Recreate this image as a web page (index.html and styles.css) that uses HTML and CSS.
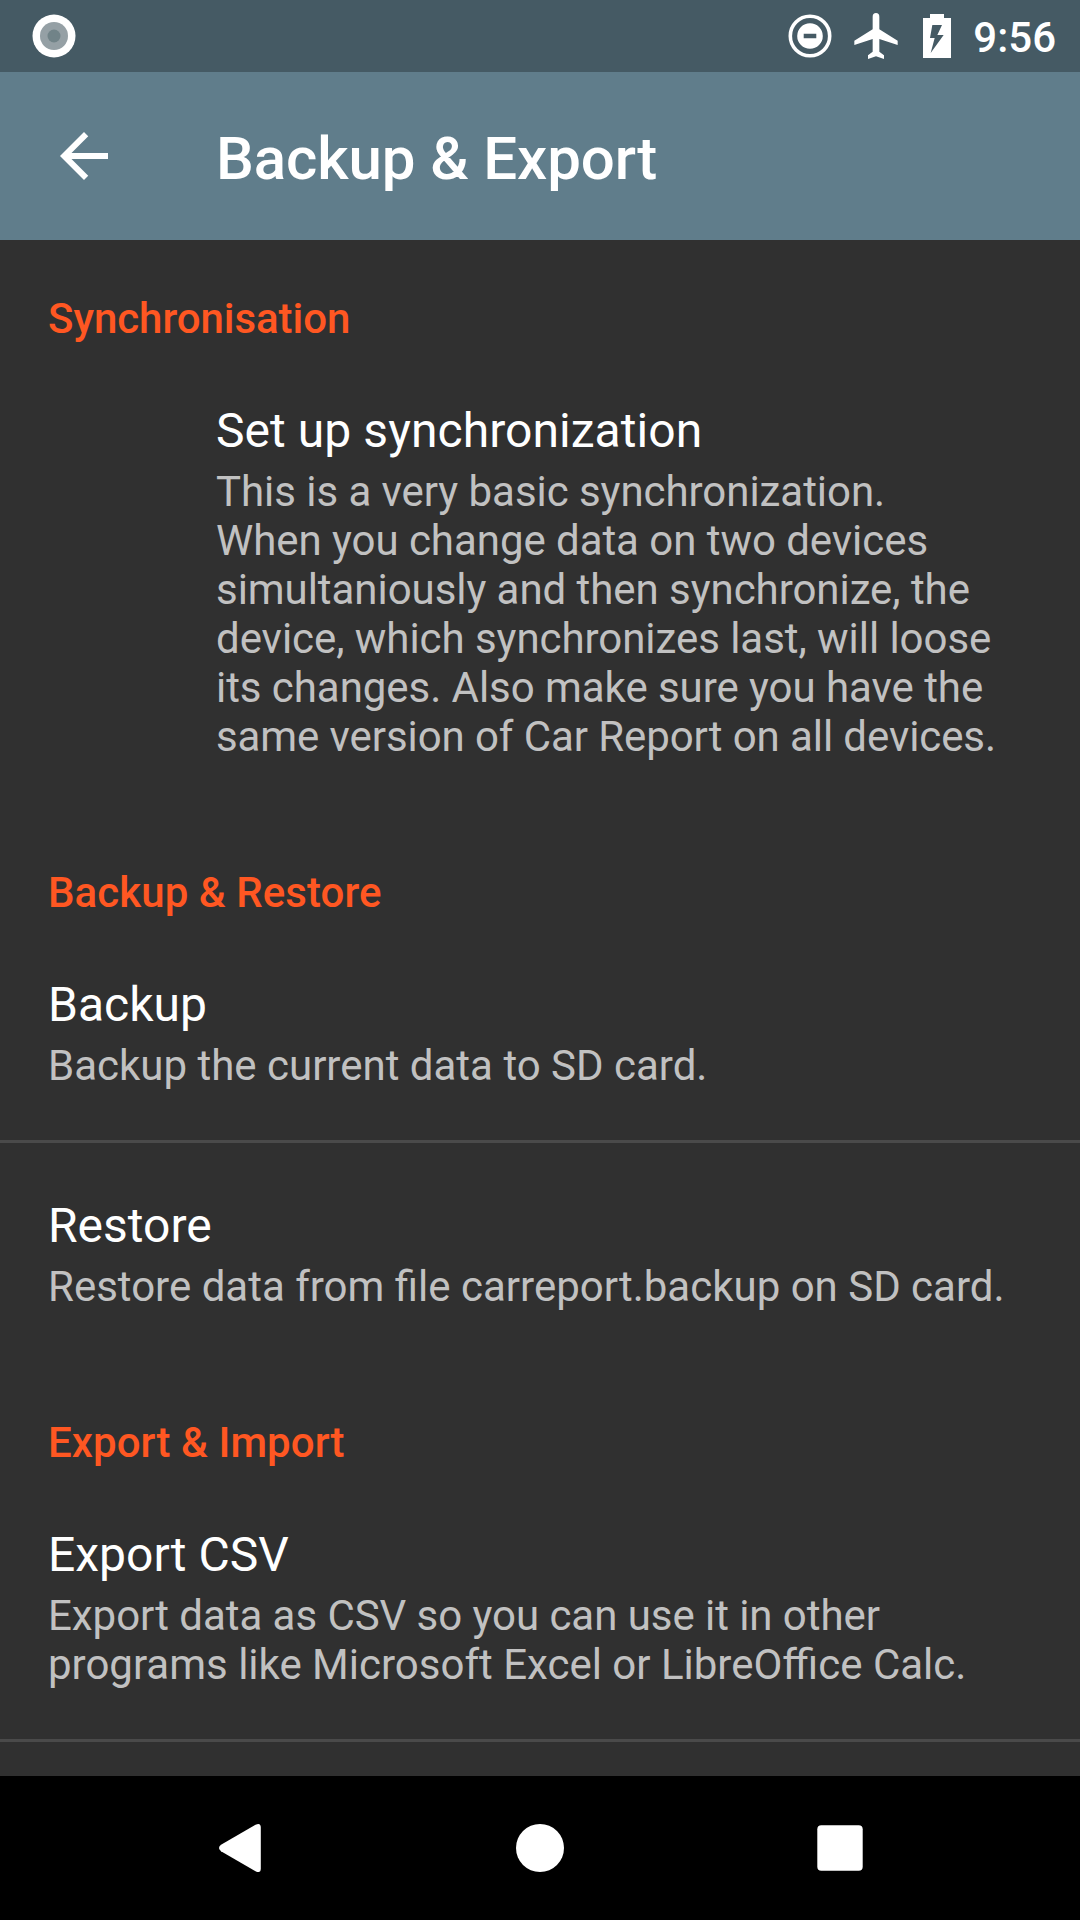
FILE: index.html
```html
<!DOCTYPE html>
<html lang="en">
<head>
<meta charset="utf-8">
<title>Backup &amp; Export</title>
<link rel="stylesheet" href="styles.css">
</head>
<body>
<div class="screen">
  <header class="status">
    <svg class="dot" width="44" height="44" viewBox="0 0 44 44"><circle cx="22" cy="22" r="21.500" fill="#fff"/><circle cx="22" cy="22" r="14" fill="#95a0a5"/><circle cx="22" cy="22" r="6.500" fill="#718388"/></svg>
    <div class="tray">
      <svg width="44" height="44" viewBox="0 0 44 44"><circle cx="22" cy="22" r="19.700" fill="none" stroke="#fff" stroke-width="3.600"/><path fill="#fff" fill-rule="evenodd" d="M22 9.200a12.800 12.800 0 1 0 0 25.600a12.800 12.800 0 1 0 0-25.600zM15.700 19.700h12.600v4.600H15.700z"/></svg>
      <svg class="plane" width="46" height="48" viewBox="279 36 138 144"><path fill="#fff" d="M348 39a10 11 0 0 1 10 11V88L413 122V135L358 117V155L372 166V177L348 169L324 177V166L338 155V117L283 135V122L338 88V50A10 11 0 0 1 348 39z"/></svg>
      <svg class="battery" width="28" height="44" viewBox="489 42 84 132"><path fill="#fff" fill-rule="evenodd" d="M510 42h42v12h21v120h-84V54h21zM517 75L510 114H524L512 159L551 105H532L546 75z"/></svg>
      <span class="time">9:56</span>
    </div>
  </header>
  <div class="toolbar">
    <svg class="back" width="72" height="72" viewBox="0 0 24 24"><path fill="#fff" d="M20 11H7.830l5.590-5.590L12 4l-8 8 8 8 1.410-1.410L7.830 13H20z"/></svg>
    <h1>Backup &amp; Export</h1>
  </div>
  <main class="list">
    <h2 class="tight">Synchronisation</h2>
    <section class="item inset"><h3 class="loose">Set up synchronization</h3><p class="tight">This is a very basic synchronization.<br>When you change data on two devices<br>simultaniously and then synchronize, the<br>device, which synchronizes last, will loose<br>its changes. Also make sure you have the<br><span class="tighter">same version of Car Report on all devices.</span></p></section>
    <h2 class="loose">Backup &amp; Restore</h2>
    <section class="item ruled"><h3>Backup</h3><p>Backup the current data to SD card.</p></section>
    <section class="item next"><h3>Restore</h3><p>Restore data from file carreport.backup on SD card.</p></section>
    <h2 class="loose">Export &amp; Import</h2>
    <section class="item ruled"><h3>Export CSV</h3><p><span class="tight">Export data as CSV so you can use it in other</span><br>programs like Microsoft Excel or LibreOffice Calc.</p></section>
  </main>
  <nav class="nav">
    <svg width="48" height="50" viewBox="0 0 48 50"><path fill="#fff" d="M39.500 1.800Q44.800-.8 44.800 4.500v41q0 5.300-5.300 2.700L5 28.200q-4-3.200 0-6.400z"/></svg>
    <svg width="48" height="50" viewBox="0 0 48 50"><circle cx="24" cy="25" r="24" fill="#fff"/></svg>
    <svg width="48" height="50" viewBox="0 0 48 50"><rect x="1.300" y="2.300" width="45.400" height="45.400" rx="4" fill="#fff"/></svg>
  </nav>
</div>
</body>
</html>
```
FILE: styles.css
```css
* { box-sizing: border-box; margin: 0; }
body { background: #303030; color: #fff; font-family: Roboto, sans-serif; }
svg { display: block; flex: none; }
.screen { width: 1080px; height: 1920px; display: flex; flex-direction: column; overflow: hidden; }
.status { height: 72px; flex: none; background: #455a64; display: flex; align-items: center; justify-content: space-between; padding: 0 24px 0 32px; }
.tray { display: flex; align-items: center; }
.plane { margin-left: 21px; }
.battery { margin-left: 24px; }
.time { margin: 3px 0 0 22px; font-size: 42px; font-weight: 500; line-height: 49px; }
.toolbar { height: 168px; flex: none; background: #607d8b; display: flex; align-items: center; padding-left: 48px; }
h1 { align-self: flex-start; margin: 51px 0 0 96px; font-size: 60px; font-weight: 500; line-height: 71px; letter-spacing: -0.1px; }
.list { flex: 1; overflow: hidden; }
h2 { height: 144px; padding: 54px 48px 0; font-size: 42px; font-weight: 500; line-height: 49px; color: #ff5722; }
.item { padding: 19px 48px 53px; }
.inset { padding-left: 216px; }
.ruled { padding-bottom: 50px; border-bottom: 3px solid #4a4a4a; }
.next { padding-top: 55px; }
h3 { font-size: 48px; font-weight: 400; line-height: 56px; }
p { margin-top: 8px; font-size: 42px; line-height: 49px; color: #c1c1c1; white-space: nowrap; }
.loose { letter-spacing: 0.06px; }
.tight { letter-spacing: -0.05px; }
.tighter { letter-spacing: -0.085px; }
.nav { height: 144px; flex: none; background: #000; display: flex; align-items: center; justify-content: center; gap: 252px; }
```
